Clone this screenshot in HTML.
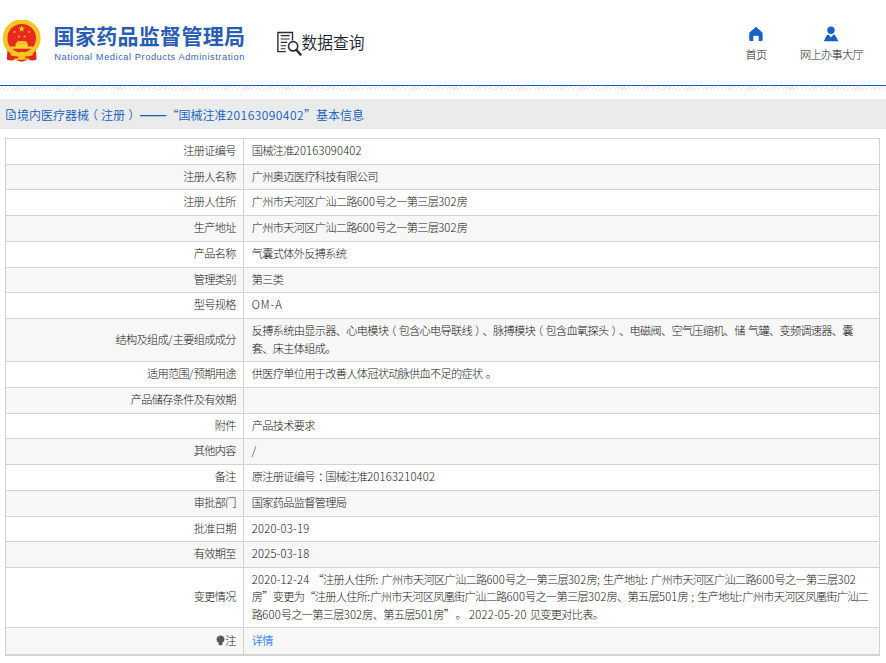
<!DOCTYPE html>
<html lang="zh-CN">
<head>
<meta charset="utf-8">
<title>国家药品监督管理局 数据查询</title>
<style>
html,body{margin:0;padding:0;background:#fff;}
body{width:886px;height:663px;overflow:hidden;position:relative;
  font-family:"Liberation Sans","Noto Sans CJK SC",sans-serif;color:#3a3a3a;text-spacing-trim:space-all;}
.cj{font-family:"Noto Sans CJK SC","Liberation Sans",sans-serif;}
#hdr{position:absolute;left:0;top:0;width:886px;height:99px;background:#fff;}
#emblem{position:absolute;left:2px;top:19.8px;width:40px;height:43px;}
#lg1{position:absolute;left:53.6px;top:20px;height:30px;line-height:30px;font-size:21px;font-weight:700;color:#2a5cb3;
  font-family:"Noto Sans CJK SC","Liberation Sans",sans-serif;white-space:nowrap;letter-spacing:0.3px;}
#lg2{position:absolute;left:54.3px;top:49.6px;height:14px;line-height:14px;font-size:9.3px;letter-spacing:0.54px;color:#3866b5;white-space:nowrap;}
#qicon{position:absolute;left:275px;top:30px;width:28px;height:28px;}
#qtxt{position:absolute;left:301.5px;top:27.6px;height:28px;line-height:28px;font-size:15.75px;font-weight:350;color:#22222e;white-space:nowrap;transform:scaleY(1.1);transform-origin:50% 50%;
  font-family:"Noto Sans CJK SC","Liberation Sans",sans-serif;}
.nav{position:absolute;top:47px;text-align:center;font-size:11.2px;letter-spacing:-0.7px;font-weight:300;color:#1a1a1a;white-space:nowrap;
  font-family:"Noto Sans CJK SC","Liberation Sans",sans-serif;}
.nav svg{display:block;margin:0 auto;}
.nav span{display:block;line-height:14px;}
#rule{position:absolute;left:0;top:84.6px;width:886px;height:1.6px;background:#0f5fc4;}
#hatch{position:absolute;left:0;top:86px;width:886px;height:4px;
  background:repeating-linear-gradient(135deg,#fff 0,#fff 1.8px,#e6e6e6 1.8px,#e6e6e6 2.7px);}
#tbar{position:absolute;left:0;top:99px;width:886px;height:30px;background:#ebebeb;}
#ttl{position:absolute;left:17px;top:0.5px;height:30px;line-height:30px;font-size:12px;font-weight:350;color:#0c5dc0;white-space:nowrap;
  font-family:"Noto Sans CJK SC","Liberation Sans",sans-serif;}
#ticon{position:absolute;left:5px;top:9px;width:12px;height:13px;}
#tb{position:absolute;left:5px;top:138px;width:875px;box-sizing:border-box;border:1px solid #d3d3d3;border-bottom:none;
  font-size:11.2px;letter-spacing:-0.7px;font-family:"Noto Sans CJK SC","Liberation Sans",sans-serif;color:#161616;font-weight:300;word-spacing:1.35px;line-height:17.14px;}
.r{display:flex;box-sizing:border-box;border-bottom:1px solid #d3d3d3;background:#fff;height:26px;}
.r.g{background:#f7f7f7;}
.r.h25{height:25px;}
.l{box-sizing:border-box;width:238px;flex:none;border-right:1px solid #d3d3d3;display:flex;align-items:center;justify-content:flex-end;
  padding:0 7.3px 1px 0;white-space:nowrap;}
.v{flex:1;display:flex;align-items:center;padding:0 0 1px 7.8px;line-height:17.14px;}
.v a{color:#3a8cf0;text-decoration:none;font-weight:400;}
.n{letter-spacing:0.19px;}
.d{letter-spacing:0.22px;}
.om{letter-spacing:0.9px;}
.sl{letter-spacing:0.3px;}
.fc{position:relative;left:0.3em;}
.pl{position:relative;left:-0.26em;}
.pr{position:relative;left:0.27em;}
.ds{display:inline-block;font-weight:700;width:24.7px;margin-left:-0.8px;transform:translateY(-1.25px) scaleX(1.37);transform-origin:0 50%;}
.n2{letter-spacing:0.45px;}
.ql,.qr{display:inline-block;width:1em;letter-spacing:0;}
#tb .ql,#tb .qr{width:10.5px;}
.ql{text-align:right;}
.qr{text-align:left;}
</style>
</head>
<body>
<div id="hdr">
  <svg id="emblem" viewBox="0 0 40 43">
<path d="M5.5 29 L4.8 39.5 Q9 41.5 13 39.8 L19.7 41.8 L26.4 39.8 Q30.5 41.5 34.6 39.5 L33.9 29 Z" fill="#e3261b"/>
<circle cx="19.7" cy="18.2" r="16.6" fill="#e8291d" stroke="#f4c623" stroke-width="4.6"/>
<g fill="#f7d02c"><polygon points="19.70,5.20 20.55,7.64 23.12,7.69 21.07,9.24 21.82,11.71 19.70,10.24 17.58,11.71 18.33,9.24 16.28,7.69 18.85,7.64"/><polygon points="12.50,10.30 12.88,11.38 14.02,11.41 13.11,12.10 13.44,13.19 12.50,12.54 11.56,13.19 11.89,12.10 10.98,11.41 12.12,11.38"/><polygon points="27.00,10.30 27.38,11.38 28.52,11.41 27.61,12.10 27.94,13.19 27.00,12.54 26.06,13.19 26.39,12.10 25.48,11.41 26.62,11.38"/><polygon points="17.00,14.80 17.38,15.88 18.52,15.91 17.61,16.60 17.94,17.69 17.00,17.04 16.06,17.69 16.39,16.60 15.48,15.91 16.62,15.88"/><polygon points="22.60,14.80 22.98,15.88 24.12,15.91 23.21,16.60 23.54,17.69 22.60,17.04 21.66,17.69 21.99,16.60 21.08,15.91 22.22,15.88"/>
<path d="M15 21.6 Q19.7 20.6 24.4 21.6 L25.2 23.4 L14.2 23.4 Z"/>
<rect x="13.6" y="23.4" width="12.2" height="3.6"/>
<rect x="8.6" y="26.6" width="22.2" height="2.2" rx="0.6"/>
</g>
<g fill="none" stroke="#f4c623" stroke-width="1.5" stroke-linecap="round">
<path d="M9 34.5 Q14 36.8 19.7 33.2 Q25.4 36.8 30.4 34.5"/>
<path d="M12.5 39.2 Q16.5 39.8 19.7 37.4 Q22.9 39.8 26.9 39.2"/>
</g>
<ellipse cx="19.7" cy="33.4" rx="3.2" ry="1.7" fill="#f4c623"/>
<ellipse cx="19.7" cy="38" rx="3.6" ry="1.8" fill="#f4c623"/>
</svg>
  <div id="lg1">国家药品监督管理局</div>
  <div id="lg2">National Medical Products Administration</div>
  <svg id="qicon" viewBox="0 0 28 28"><g fill="none" stroke="#2c2c3a" stroke-linecap="butt">
<path d="M10.8 21.6 H2.9 V2.5 H17.5 V10.5" stroke-width="1.4"/>
<path d="M5.7 5.6 H14.7 M5.7 9 H14.7 M5.7 12.4 H12.2 M5.7 15.8 H11.2 M5.7 18.7 H10.6" stroke-width="1.1"/>
<circle cx="18.1" cy="16.3" r="4.6" stroke-width="1.7" fill="#fff"/>
<path d="M21.5 20 L25.6 24.6" stroke-width="2.4" stroke-linecap="round"/>
</g></svg>
  <div id="qtxt">数据查询</div>
  <svg style="position:absolute;left:748px;top:26px" width="16" height="16" viewBox="0 0 16 16"><path d="M7.7 1.1 Q8.1 0.9 8.5 1.2 L14.3 6.6 Q14.6 6.9 14.6 7.4 V14.1 Q14.6 14.9 13.8 14.9 H10.7 V10.6 Q10.7 9.7 9.8 9.7 H6.2 Q5.3 9.7 5.3 10.6 V14.9 H2.0 Q1.2 14.9 1.2 14.1 V7.4 Q1.2 6.9 1.5 6.6 Z" fill="#1660c9"/></svg><div class="nav" style="left:736px;width:40px;"><span>首页</span></div>
  <svg style="position:absolute;left:822px;top:25px" width="18" height="18" viewBox="0 0 18 18"><g fill="#1660c9"><circle cx="9" cy="5.2" r="3.7"/><path d="M1.8 16.3 L4.3 11.2 Q5 9.6 6.6 9.5 L9 12.6 L11.4 9.5 Q13 9.6 13.7 11.2 L16.5 16.3 Z"/></g></svg><div class="nav" style="left:791.5px;width:80px;"><span>网上办事大厅</span></div>
  <div id="rule"></div>
  <div id="hatch"></div>
</div>
<div id="tbar">
  <svg id="ticon" viewBox="0 0 12 13"><g fill="none" stroke="#1a63c6" stroke-width="0.9"><path d="M1.8 1.5 H7.6 L10.2 4.1 V11.5 H1.8 Z"/><path d="M7.3 1.7 V4.4 H10"/><path d="M4 5.1 H6 M4 7.4 H8.1 M4 9.6 H8.1" stroke-width="0.9"/></g></svg>
  <div id="ttl">境内医疗器械<span class="pl">（</span>注册<span class="pr">）</span> <span class="ds">——</span><span class="ql" style="margin-left:2.9px">“</span>国械注准<span class="n2">20163090402</span><span class="qr">”</span>基本信息</div>
</div>
<div id="tb">
  <div class="r"><div class="l">注册证编号</div><div class="v"><span>国械注准<span class="n">20163090402</span></span></div></div>
  <div class="r g h25"><div class="l">注册人名称</div><div class="v">广州奥迈医疗科技有限公司</div></div>
  <div class="r"><div class="l">注册人住所</div><div class="v"><span>广州市天河区广汕二路<span class="n">600</span>号之一第三层<span class="n">302</span>房</span></div></div>
  <div class="r g"><div class="l">生产地址</div><div class="v"><span>广州市天河区广汕二路<span class="n">600</span>号之一第三层<span class="n">302</span>房</span></div></div>
  <div class="r"><div class="l">产品名称</div><div class="v">气囊式体外反搏系统</div></div>
  <div class="r g h25"><div class="l">管理类别</div><div class="v">第三类</div></div>
  <div class="r"><div class="l">型号规格</div><div class="v"><span class="om">OM-A</span></div></div>
  <div class="r g" style="height:43px"><div class="l">结构及组成<span class="sl">/</span>主要组成成分</div><div class="v"><span>反搏系统由显示器、心电模块<span class="pl">（</span>包含心电导联线<span class="pr">）</span>、脉搏模块<span class="pl">（</span>包含血氧探头<span class="pr">）</span>、电磁阀、空气压缩机、储 气罐、变频调速器、囊<br>套、床主体组成。</span></div></div>
  <div class="r"><div class="l">适用范围<span class="sl">/</span>预期用途</div><div class="v">供医疗单位用于改善人体冠状动脉供血不足的症状 。</div></div>
  <div class="r g"><div class="l">产品储存条件及有效期</div><div class="v"></div></div>
  <div class="r h25"><div class="l">附件</div><div class="v">产品技术要求</div></div>
  <div class="r g"><div class="l">其他内容</div><div class="v">/</div></div>
  <div class="r"><div class="l">备注</div><div class="v"><span>原注册证编号<span class="fc">：</span>国械注准<span class="n">20163210402</span></span></div></div>
  <div class="r g"><div class="l">审批部门</div><div class="v">国家药品监督管理局</div></div>
  <div class="r h25"><div class="l">批准日期</div><div class="v"><span class="d">2020-03-19</span></div></div>
  <div class="r g"><div class="l">有效期至</div><div class="v"><span class="d">2025-03-18</span></div></div>
  <div class="r" style="height:60px"><div class="l">变更情况</div><div class="v"><span><span class="d">2020-12-24</span> <span class="ql">“</span>注册人住所<span class="n">:</span> 广州市天河区广汕二路<span class="n">600</span>号之一第三层<span class="n">302</span>房<span class="n">;</span> 生产地址<span class="n">:</span> 广州市天河区广汕二路<span class="n">600</span>号之一第三层<span class="n">302</span><br>房<span class="qr">”</span>变更为<span class="ql">“</span>注册人住所<span class="n">:</span>广州市天河区凤凰街广汕二路<span class="n">600</span>号之一第三层<span class="n">302</span>房、第五层<span class="n">501</span>房 <span class="n">;</span> 生产地址<span class="n">:</span>广州市天河区凤凰街广汕二<br>路<span class="n">600</span>号之一第三层<span class="n">302</span>房、第五层<span class="n">501</span>房<span class="qr" style="margin-right:1.2px">”</span>。 <span class="d">2022-05-20</span> 见变更对比表。</span></div></div>
  <div class="r g" style="height:28px;border-bottom-width:2px"><div class="l"><svg style="flex:none;margin-right:0.5px" width="9" height="11" viewBox="0 0 9 11"><path d="M4.5 0.4 A3.9 3.9 0 0 1 6.6 7.6 L6.3 9.6 Q6.2 10.3 5.5 10.3 H3.5 Q2.8 10.3 2.7 9.6 L2.4 7.6 A3.9 3.9 0 0 1 4.5 0.4 Z" fill="#565656"/><path d="M2.6 3.4 A2.2 2.2 0 0 1 4.2 1.9" stroke="#aaa" stroke-width="0.7" fill="none"/></svg>注</div><div class="v"><a>详情</a></div></div>
</div>
</body>
</html>
